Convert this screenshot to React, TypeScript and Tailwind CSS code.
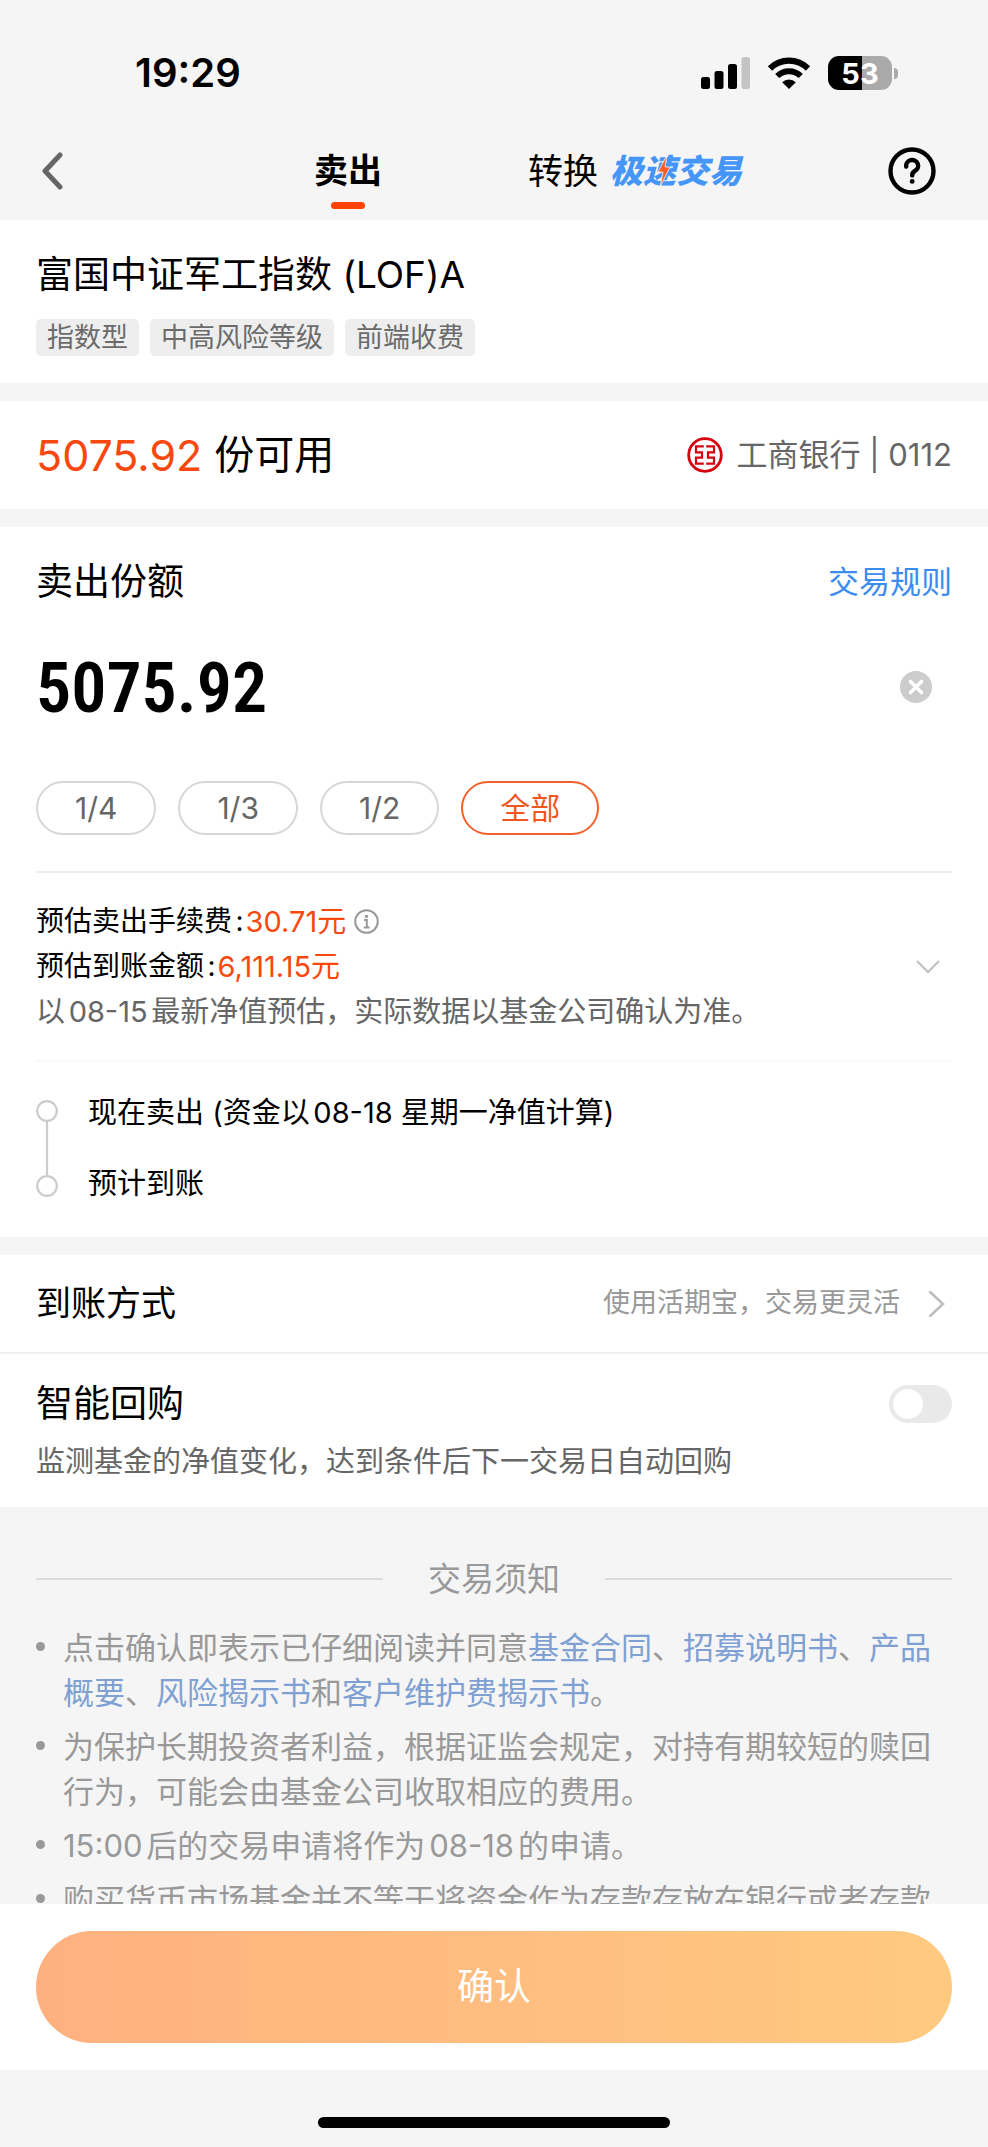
import { useState } from "react";
import type { ReactNode } from "react";

const PORTIONS = ["1/4", "1/3", "1/2", "全部"];

const TAGS = ["指数型", "中高风险等级", "前端收费"];

const SignalIcon = () => (
  <svg width="49" height="32" viewBox="0 0 49 32" aria-hidden="true">
    <rect x="0" y="20" width="9" height="12" rx="2.5" />
    <rect x="13.5" y="14" width="9" height="18" rx="2.5" />
    <rect x="27" y="7" width="9" height="25" rx="2.5" />
    <rect x="40.5" y="0" width="8.5" height="32" rx="2.5" fill="#c4c4c4" />
  </svg>
);

const WifiIcon = () => (
  <svg width="44" height="32" viewBox="0 0 44 32" fill="none" aria-hidden="true">
    <path d="M3 11.5 A27 27 0 0 1 41 11.5" stroke="#000" strokeWidth="6.2" />
    <path d="M10.2 19 A17 17 0 0 1 33.8 19" stroke="#000" strokeWidth="5.8" />
    <path d="M22 32 L15.2 25.2 A9.8 9.8 0 0 1 28.8 25.2 Z" fill="#000" />
  </svg>
);

const Battery = () => (
  <div className="flex items-center gap-0.5">
    <div className="flex h-[34px] w-16 items-center justify-center rounded-[11px] bg-linear-to-r from-black from-53% to-[#aaaaaa] to-53% text-[29px] leading-none font-bold text-white">
      53
    </div>
    <div className="h-[11px] w-1 rounded-r-full bg-[#aaaaaa]" />
  </div>
);

const StatusBar = () => (
  <div className="flex h-[146px] items-center justify-between pr-[90px] pl-[135px]">
    <span className="text-[40px] leading-none font-semibold">19:29</span>
    <div className="flex items-center gap-[17px]">
      <SignalIcon />
      <WifiIcon />
      <Battery />
    </div>
  </div>
);

const FastTradeBadge = () => (
  <span className="relative text-[33px] leading-none font-black text-[#4596f8] italic">
    极速交易
    <svg className="absolute top-0 left-12 h-8 w-3" viewBox="0 0 12 32" aria-hidden="true">
      <path d="M9 0 L0 17 H5 L2 32 L12 12 H7 Z" fill="#ff5a1f" stroke="#f5f5f5" strokeWidth="0.8" />
    </svg>
  </span>
);

const NavBar = () => (
  <header className="flex h-[74px] items-start justify-between px-9">
    <button type="button" aria-label="返回" className="flex h-[50px] w-[132px] items-center pl-1.5">
      <svg width="21" height="38" viewBox="0 0 21 38" fill="none" stroke="#666" strokeWidth="5" strokeLinecap="round" strokeLinejoin="round">
        <path d="M18 3 L3 19 L18 35" />
      </svg>
    </button>
    <nav className="flex gap-[146px]">
      <button type="button" className="flex flex-col items-center gap-1.5 text-[34px] leading-[50px] font-bold">
        卖出
        <span className="h-[7px] w-[34px] rounded-full bg-[#ff4400]" />
      </button>
      <button type="button" className="flex h-[50px] items-center gap-3 text-[35px]">
        转换
        <FastTradeBadge />
      </button>
    </nav>
    <button type="button" aria-label="帮助" className="flex h-[50px] items-center pr-4">
      <svg width="48" height="48" viewBox="0 0 48 48" fill="none" stroke="#000" aria-hidden="true">
        <circle cx="24" cy="24" r="21.5" strokeWidth="4.4" />
        <path d="M18.2 19.6 A6 5.8 0 1 1 26.8 24 C24.8 25.2 24.2 26.2 24.2 28.4" strokeWidth="4.4" strokeLinecap="round" />
        <circle cx="24.2" cy="34.4" r="2.4" fill="#000" stroke="none" />
      </svg>
    </button>
  </header>
);

const FundInfo = () => (
  <section className="bg-white px-9 pt-[30px] pb-[27px]">
    <h1 className="text-[37px] leading-[50px]">富国中证军工指数 (LOF)A</h1>
    <ul className="mt-[19px] flex gap-[11px]">
      {TAGS.map((tag) => (
        <li key={tag} className="rounded-[5px] bg-[#eeeeee] px-[11px] text-[27px] leading-[37px] text-[#6b6b6b]">
          {tag}
        </li>
      ))}
    </ul>
  </section>
);

const BankLogo = () => (
  <svg width="36" height="36" viewBox="0 0 36 36" fill="none" stroke="#d7000f" aria-hidden="true">
    <circle cx="18" cy="18" r="16.3" strokeWidth="2.8" />
    <path d="M16.8 9.4 H9 V15.4 H15 V20.6 H9 V26.6 H16.8 M19.2 9.4 H27 V15.4 H21 V20.6 H27 V26.6 H19.2" strokeWidth="2.2" />
  </svg>
);

const Holding = () => (
  <section className="flex h-[108px] items-center justify-between bg-white px-9">
    <p className="flex items-center gap-3 text-[40px]">
      <span className="text-[43px] text-[#f9480d]">5075.92</span>
      份可用
    </p>
    <p className="flex items-center gap-3.5 text-[31px] text-[#666666]">
      <BankLogo />
      工商银行 | 0112
    </p>
  </section>
);

const AmountForm = () => {
  const [amount, setAmount] = useState("5075.92");
  const [portion, setPortion] = useState("全部");

  return (
    <>
      <div className="flex items-center justify-between pt-[30px]">
        <label htmlFor="amount" className="text-[37px] leading-[50px]">
          卖出份额
        </label>
        <a href="#rules" className="text-[31px] text-[#3b8cf0]">
          交易规则
        </a>
      </div>
      <div className="mt-10 flex h-20 items-center justify-between pr-5">
        <input
          id="amount"
          inputMode="decimal"
          value={amount}
          onChange={(e) => setAmount(e.target.value)}
          className="h-20 min-w-0 flex-1 pt-0.5 font-['Roboto_Condensed','Roboto',sans-serif] text-[70px] font-semibold outline-none"
        />
        <button type="button" aria-label="清除" onClick={() => setAmount("")}>
          <svg width="32" height="32" viewBox="0 0 32 32" aria-hidden="true">
            <circle cx="16" cy="16" r="16" fill="#cccccc" />
            <path d="M10.5 10.5 L21.5 21.5 M21.5 10.5 L10.5 21.5" stroke="#fff" strokeWidth="3.6" strokeLinecap="round" />
          </svg>
        </button>
      </div>
      <div className="mt-[54px] flex gap-[22px] pb-9">
        {PORTIONS.map((item) => (
          <button
            key={item}
            type="button"
            onClick={() => setPortion(item)}
            className={`h-[54px] rounded-full border-2 px-[37px] text-[30px] leading-none ${
              item === portion ? "border-[#f0622d] text-[#f0561d]" : "border-[#d6d6d6] text-[#666666]"
            }`}
          >
            {item}
          </button>
        ))}
      </div>
    </>
  );
};

const Money = ({ children }: { children: string }) => (
  <span className="ml-0.5 text-[29px] text-[#f9480d] [text-autospace:no-autospace]">{children}</span>
);

const Estimate = () => (
  <div className="flex items-center justify-between border-t-2 border-[#eeeeee] pt-[26px] pr-3 pb-[26px]">
    <div className="text-[28px] leading-[45px]">
      <p className="flex items-center">
        预估卖出手续费:<Money>30.71元</Money>
        <svg className="ml-2" width="25" height="25" viewBox="0 0 25 25" fill="none" stroke="#999" aria-hidden="true">
          <circle cx="12.5" cy="12.5" r="11.3" strokeWidth="2" />
          <path d="M10 11 H12.8 V18 M9.8 18.5 H15.6" strokeWidth="2" />
          <circle cx="12.4" cy="7.4" r="1.7" fill="#999" stroke="none" />
        </svg>
      </p>
      <p className="flex items-center">
        预估到账金额:<Money>6,111.15元</Money>
      </p>
      <p className="text-[29px] text-[#666666]">以08-15最新净值预估，实际数据以基金公司确认为准。</p>
    </div>
    <button type="button" aria-label="展开">
      <svg width="24" height="14" viewBox="0 0 24 14" fill="none" stroke="#c4c4c4" strokeWidth="2.4" aria-hidden="true">
        <path d="M1 1 L12 12 L23 1" />
      </svg>
    </button>
  </div>
);

const Timeline = () => (
  <div className="flex gap-[30px] border-t-2 border-[#f9f9f9] pt-[38px] pb-10">
    <svg width="22" height="97" viewBox="0 0 22 97" fill="none" stroke="#cccccc" strokeWidth="2.2" aria-hidden="true">
      <circle cx="11" cy="11" r="9.8" />
      <path d="M11 21 V76" />
      <circle cx="11" cy="86" r="9.8" />
    </svg>
    <ol className="flex flex-col justify-between text-[29px] leading-[26px]">
      <li>现在卖出 (资金以08-18 星期一净值计算)</li>
      <li>预计到账</li>
    </ol>
  </div>
);

const Settings = () => (
  <section className="bg-white">
    <a href="#method" className="flex h-[97px] items-center px-9 pr-[43px]">
      <span className="flex-1 text-[35px]">到账方式</span>
      <span className="text-[27px] text-[#999999]">使用活期宝，交易更灵活</span>
      <svg className="ml-7" width="17" height="28" viewBox="0 0 17 28" fill="none" stroke="#bdbdbd" strokeWidth="2.6" aria-hidden="true">
        <path d="M1.5 1.5 L15 14 L1.5 26.5" />
      </svg>
    </a>
    <div className="border-t-2 border-[#f0f0f0] px-9 pt-6 pb-[25px]">
      <div className="flex items-center justify-between">
        <label htmlFor="rebuy" className="text-[37px] leading-[52px]">
          智能回购
        </label>
        <input
          id="rebuy"
          type="checkbox"
          role="switch"
          className="h-[38px] w-[63px] appearance-none rounded-full bg-[#e9e9e9] p-1 before:block before:h-[30px] before:w-[30px] before:rounded-full before:bg-white checked:bg-[#ff4400] checked:before:ml-[25px]"
        />
      </div>
      <p className="mt-3 text-[29px] leading-10 text-[#666666]">
        监测基金的净值变化，达到条件后下一交易日自动回购
      </p>
    </div>
  </section>
);

const DocLink = ({ children }: { children: string }) => (
  <a href="#doc" className="text-[#7fa0d2]">
    {children}
  </a>
);

const Note = ({ children }: { children: ReactNode }) => (
  <li className="flex gap-[18px]">
    <span className="mt-[17px] h-[9px] w-[9px] shrink-0 rounded-full bg-[#999999]" />
    <p>{children}</p>
  </li>
);

const Notes = () => (
  <section className="min-h-0 flex-1 overflow-hidden px-9 text-[#999999]">
    <div className="flex items-center gap-[45px] pt-12">
      <div className="h-0.5 flex-1 bg-[#dcdcdc]" />
      <h2 className="text-[33px] leading-[48px]">交易须知</h2>
      <div className="h-0.5 flex-1 bg-[#dcdcdc]" />
    </div>
    <ul className="mt-[22px] flex flex-col gap-[9px] text-[31px] leading-[45px]">
      <Note>
        点击确认即表示已仔细阅读并同意<DocLink>基金合同</DocLink>、<DocLink>招募说明书</DocLink>、
        <DocLink>产品概要</DocLink>、<DocLink>风险揭示书</DocLink>和<DocLink>客户维护费揭示书</DocLink>。
      </Note>
      <Note>为保护长期投资者利益，根据证监会规定，对持有期较短的赎回行为，可能会由基金公司收取相应的费用。</Note>
      <Note>15:00后的交易申请将作为08-18的申请。</Note>
      <Note>购买货币市场基金并不等于将资金作为存款存放在银行或者存款</Note>
    </ul>
  </section>
);

const Footer = () => (
  <footer>
    <div className="bg-white px-9 py-[27px]">
      <button
        type="button"
        className="h-28 w-full rounded-full bg-linear-to-r from-[#ffb07f] to-[#ffca80] text-[37px] text-white"
      >
        确认
      </button>
    </div>
    <div className="flex h-[77px] items-end justify-center pb-[19px]">
      <div className="h-[11px] w-[352px] rounded-full bg-black" />
    </div>
  </footer>
);

export default function App() {
  return (
    <div
      lang="zh-CN"
      className="flex h-screen flex-col bg-[#f5f5f5] font-['Inter','Noto_Sans_CJK_SC',sans-serif] text-black [text-autospace:normal]"
    >
      <StatusBar />
      <NavBar />
      <main className="flex min-h-0 flex-1 flex-col">
        <div className="flex flex-col gap-[18px]">
          <FundInfo />
          <Holding />
          <section className="bg-white px-9">
            <AmountForm />
            <Estimate />
            <Timeline />
          </section>
          <Settings />
        </div>
        <Notes />
      </main>
      <Footer />
    </div>
  );
}
